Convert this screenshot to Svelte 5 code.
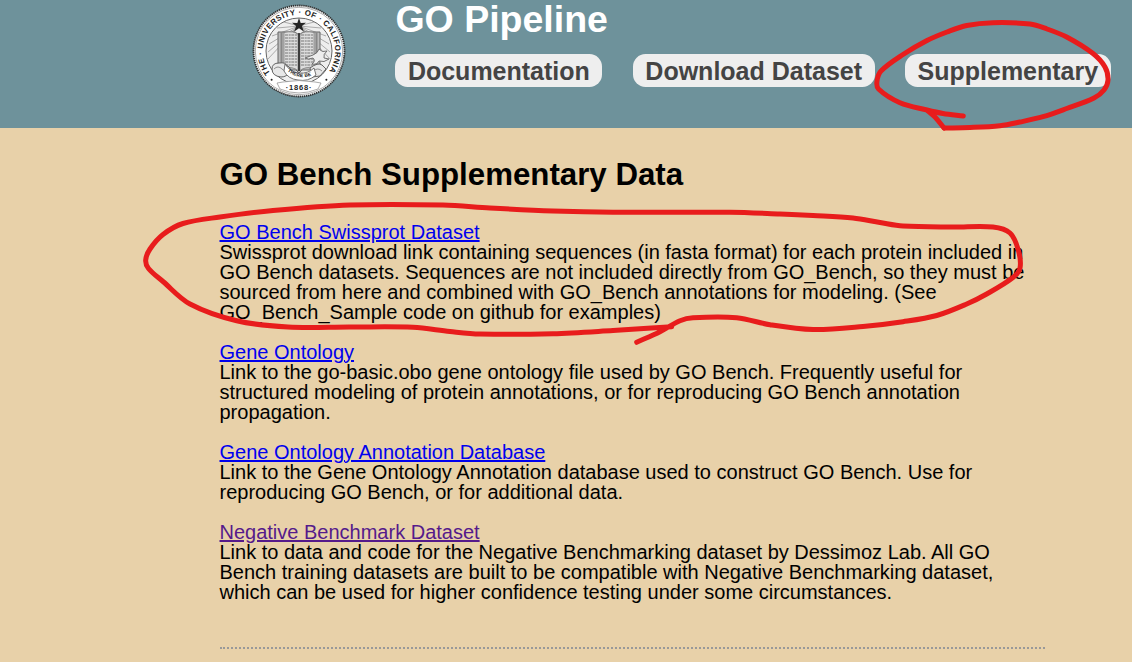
<script>
  const nav = ['Documentation', 'Download Dataset', 'Supplementary'];

  const entries = [
    {
      title: 'GO Bench Swissprot Dataset',
      lines: [
        'Swissprot download link containing sequences (in fasta format) for each protein included in',
        'GO Bench datasets. Sequences are not included directly from GO_Bench, so they must be',
        'sourced from here and combined with GO_Bench annotations for modeling. (See',
        'GO_Bench_Sample code on github for examples)'
      ]
    },
    {
      title: 'Gene Ontology',
      lines: [
        'Link to the go-basic.obo gene ontology file used by GO Bench. Frequently useful for',
        'structured modeling of protein annotations, or for reproducing GO Bench annotation',
        'propagation.'
      ]
    },
    {
      title: 'Gene Ontology Annotation Database',
      lines: [
        'Link to the Gene Ontology Annotation database used to construct GO Bench. Use for',
        'reproducing GO Bench, or for additional data.'
      ]
    },
    {
      title: 'Negative Benchmark Dataset',
      visited: true,
      lines: [
        'Link to data and code for the Negative Benchmarking dataset by Dessimoz Lab. All GO',
        'Bench training datasets are built to be compatible with Negative Benchmarking dataset,',
        'which can be used for higher confidence testing under some circumstances.'
      ]
    }
  ];

  // Freehand pen strokes, as sampled points.
  const strokes = [
    [[963.3,116],[943,113.5],[927,110],[900,102.7],[878.5,89],[877,81],[881,71],[903,54.5],[927,40.5],[947,32],[966.7,25.5],[993,22.7],[1030,24],[1047,29],[1066.7,37],[1093,53.5],[1105,67],[1108,80],[1104,90],[1094,98],[1066.7,108.5],[1043,116.7],[1020,122],[1000,125.7],[970,127.5],[944,128]],
    [[944,128],[935,117],[928,111]],
    [[671.7,326.7],[613,330.5],[553,333.7],[480,334],[450,331.5],[413,327.3],[350,327],[288,327],[236.7,320.7],[190,304],[163,281.5],[148.5,268.5],[145.7,260],[150,249],[163,234.5],[183,223.5],[220,217],[273,210.5],[350,205],[443,205],[490,208],[553,211],[613,212.3],[730,212.3],[780,214],[813,215.5],[853,218],[880,222.5],[903,226],[953,227],[993,227],[1010,233],[1018.3,250],[1020,268],[1013,277.5],[986.7,294],[966.7,304],[936.7,315.5],[903,321.7],[863,326.5],[813,329.5],[770,324.7],[736.7,317.7],[693,317.7],[680,320.7],[660,331.7],[636.7,342.3]]
  ];

  function smooth(p) {
    let d = `M${p[0]}`;
    for (let i = 0; i < p.length - 1; i++) {
      const a = p[i - 1] ?? p[i], b = p[i], c = p[i + 1], e = p[i + 2] ?? c;
      const len = Math.hypot(c[0] - b[0], c[1] - b[1]);
      const ab = Math.hypot(c[0] - a[0], c[1] - a[1]) || 1;
      const be = Math.hypot(e[0] - b[0], e[1] - b[1]) || 1;
      const k = len / 3;
      d += `C${b[0] + (c[0] - a[0]) / ab * k},${b[1] + (c[1] - a[1]) / ab * k} ${c[0] - (e[0] - b[0]) / be * k},${c[1] - (e[1] - b[1]) / be * k} ${c}`;
    }
    return d;
  }

  const rows = Array.from({ length: 11 }, (_, i) => 31 + i * 3);
</script>

<div class="page">
  <header>
    <svg class="seal" viewBox="0 0 94 94" width="94" height="94">
      <circle cx="47" cy="47" r="45.5" fill="#fff" stroke="#333" stroke-width="1.8" stroke-dasharray="1.4 .7" />
      <circle cx="47" cy="47" r="43.7" fill="none" stroke="#888" stroke-width=".7" />
      <circle cx="47" cy="47" r="33" fill="#eee" stroke="#666" stroke-width="1" />
      <path d="M47 22L20 32M47 22L17 40M47 22L16 48M47 22L15 56M47 22L74 32M47 22L77 40M47 22L78 48M47 22L79 56M47 22L32 18M47 22L62 18M47 22L25 24M47 22L69 24" stroke="#999" stroke-width=".8" />
      <path d="M26 28v38h18l3 3 3-3h18V28H51l-4 3-4-3z" fill="#bbb" stroke="#666" stroke-width="1" />
      <path d="M29.5 28v37M64.5 28v37" stroke="#888" stroke-width="2" />
      <path d="M32 28.5q10-2 14 2v36q-5-4-14-3zM62 28.5q-10-2-14 2v36q5-4 14-3z" fill="#ddd" stroke="#777" stroke-width=".7" />
      <g stroke="#777" stroke-width="1" stroke-dasharray="3 .7 2 .6">
        {#each rows as y}<path d="M33 {y}h12M49 {y}h12" />{/each}
      </g>
      <path d="M47 29v38" stroke="#333" stroke-width="1.8" />
      <path d="M47 14l1.7 5 5.3-.2-4.1 3.3 1.9 5.3-4.8-3.1-4.8 3.1 1.9-5.3-4.1-3.3 5.3.2z" fill="#222" />
      <path d="M61 51q5-2 6-6 3 4 8 2-4 3-3 7l5 1q-5 4-10 2-2 4-7 3 4-3 1-6-5 2-8 0z" fill="#eee" stroke="#666" stroke-width=".9" />
      <path d="M20 65q0-6 7-6 7-1 8 3 5 1 2 6-2 5-8 5-9-1-9-8zM58 64q8-6 12-3l4 4-6 7-8 1z" fill="#e8e8e8" stroke="#555" stroke-width=".9" />
      <path d="M22 65q4-4 8 0t6 3M61 67q5-4 9 0" fill="none" stroke="#777" stroke-width=".8" />
      <path d="M33 60q5 8 14 9 9 1 15-5l2 7q-8 7-18 5-10-1-14-9z" fill="#fff" stroke="#555" stroke-width=".8" />
      <path id="motto" d="M35.5 67q11 10 27 3.5" fill="none" />
      <text class="motto"><textPath href="#motto">THERE BE</textPath></text>
      <path d="M31 78q16-3 32 0l6 1-3 6q-19 8-38 0l-3-6z" fill="#fff" stroke="#888" stroke-width=".7" />
      <path id="ring" d="M18.2 69A36.2 36.2 0 1 1 75.8 69" fill="none" />
      <text class="ring"><textPath href="#ring">THE · UNIVERSITY · OF · CALIFORNIA</textPath></text>
      <circle cx="19.6" cy="75.8" r="1" fill="#222" />
      <circle cx="74.4" cy="75.8" r="1" fill="#222" />
      <text class="year" x="47" y="86" text-anchor="middle">·1868·</text>
    </svg>
    <div class="brand">
      <h1>GO Pipeline</h1>
      <nav>
        {#each nav as item}<a class="tab" href="#top">{item}</a>{/each}
      </nav>
    </div>
  </header>
  <main>
    <h2>GO Bench Supplementary Data</h2>
    {#each entries as entry}
      <section>
        <a class="link" class:visited={entry.visited} href="#top">{entry.title}</a>
        {#each entry.lines as line}<p>{line}</p>{/each}
      </section>
    {/each}
    <div class="rule"></div>
  </main>
  <svg class="ink" viewBox="0 0 1132 662" width="1132" height="662">
    {#each strokes as s}<path d={smooth(s)} />{/each}
  </svg>
</div>

<style>
  :global(body) { margin: 0; overflow: hidden; }
  .page {
    position: relative;
    box-sizing: border-box;
    width: 1132px;
    height: 662px;
    overflow: hidden;
    background: #e8d1a9;
    font-family: "Liberation Sans", Arial, sans-serif;
    color: #000;
  }
  header {
    box-sizing: border-box;
    height: 128px;
    padding: 4px 0 0 252px;
    display: flex;
    align-items: flex-start;
    background: #6e929b;
  }
  .seal { flex: none; display: block; }
  .ring { font-size: 7.9px; font-weight: bold; letter-spacing: .43px; fill: #222; }
  .year { font-size: 7.5px; font-weight: bold; letter-spacing: .8px; fill: #222; }
  .motto { font-size: 4.8px; font-weight: bold; letter-spacing: .2px; fill: #222; }
  .brand { margin: -4px 0 0 49.4px; }
  h1 {
    margin: 0;
    height: 39px;
    line-height: 39px;
    font-size: 37.5px;
    color: #fff;
  }
  nav { display: flex; gap: 30.5px; margin-top: 15px; }
  .tab {
    height: 33px;
    line-height: 34px;
    padding: 0 12.5px;
    border-radius: 12.5px;
    background: #eee;
    color: #444;
    font-size: 25px;
    font-weight: bold;
    text-decoration: none;
    white-space: nowrap;
  }
  main { padding: 28px 0 0 219.5px; }
  h2 { margin: 0 0 29px; line-height: 37px; font-size: 31.25px; }
  section { margin-bottom: 20px; font-size: 20px; line-height: 20px; white-space: nowrap; }
  .link { display: block; width: max-content; color: #00e; }
  .link.visited { color: #551a8b; }
  p { margin: 0; }
  .rule { width: 825px; margin-top: 45px; border-top: 2px dotted #999; }
  .ink { position: absolute; inset: 0; pointer-events: none; }
  .ink path {
    fill: none;
    stroke: #e81c1c;
    stroke-width: 5;
    stroke-linecap: round;
    stroke-linejoin: round;
  }
</style>
